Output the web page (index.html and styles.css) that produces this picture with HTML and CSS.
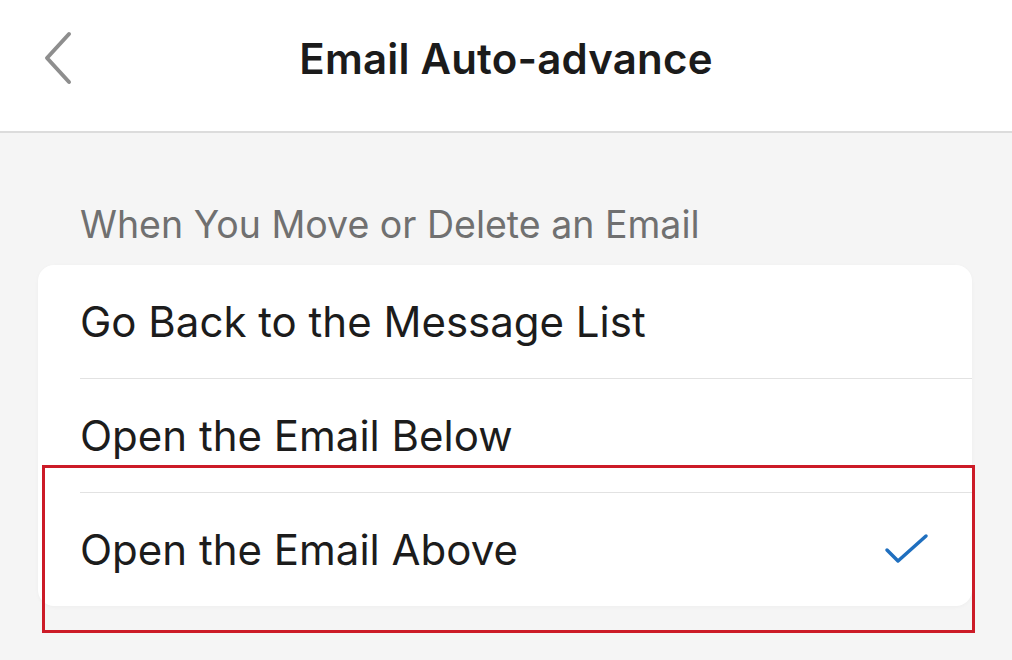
FILE: index.html
```html
<!DOCTYPE html>
<html lang="en">
<head>
    <meta charset="UTF-8">
    <meta name="viewport" content="width=device-width, initial-scale=1.0">
    <title>Email Auto-advance</title>
    <link rel="stylesheet" href="styles.css">
</head>
<body>
    <header class="top-bar">
        <a class="back-btn" href="#" aria-label="Back">
            <svg width="32" height="56" viewBox="0 0 32 56">
                <path d="M27 4 L5 28 L27 52" fill="none" stroke="#8e8e8e" stroke-width="4" stroke-linecap="round" stroke-linejoin="round"/>
            </svg>
        </a>
        <h1 class="title">Email Auto-advance</h1>
    </header>
    <main class="content">
        <div class="section-label">When You Move or Delete an Email</div>
        <ul class="option-list">
            <li class="option">Go Back to the Message List</li>
            <li class="option">Open the Email Below</li>
            <li class="option selected">
                <span>Open the Email Above</span>
                <svg class="check" width="46" height="34" viewBox="0 0 46 34">
                    <path d="M3 17 L14 28 L42 3" fill="none" stroke="#1f6fbf" stroke-width="3.5" stroke-linecap="round" stroke-linejoin="round"/>
                </svg>
                <div class="highlight"></div>
            </li>
        </ul>
    </main>
</body>
</html>
```

FILE: styles.css
```css
body {
    margin: 0;
    padding: 0;
    font-family: Inter, "Open Sans", sans-serif;
    background-color: #f5f5f5;
    width: 1012px;
    height: 660px;
    overflow: hidden;
}
.top-bar {
    position: relative;
    height: 133px;
    box-sizing: border-box;
    padding-bottom: 14px;
    background-color: #ffffff;
    border-bottom: 2px solid #dcdcdc;
    display: flex;
    align-items: center;
    justify-content: center;
}
.back-btn {
    position: absolute;
    left: 42px;
    top: 30px;
    display: block;
}
.title {
    margin: 0;
    font-size: 42px;
    font-weight: 600;
    color: #1b1b1b;
    letter-spacing: 0.2px;
}
.content {
    padding: 70px 40px 0 38px;
}
.section-label {
    padding-left: 42px;
    font-size: 37.5px;
    color: #707070;
    line-height: 44px;
    margin-bottom: 18px;
}
.option-list {
    list-style: none;
    margin: 0;
    padding: 0 0 0 42px;
    background-color: #ffffff;
    border-radius: 16px;
    box-shadow: 0 1px 4px rgba(0, 0, 0, 0.03);
}
.option {
    position: relative;
    height: 113px;
    display: flex;
    align-items: center;
    justify-content: space-between;
    font-size: 42px;
    color: #1c1c1c;
    border-bottom: 1px solid #e2e2e2;
}
.option:last-child {
    border-bottom: none;
}
.check {
    margin-right: 42px;
}
.highlight {
    position: absolute;
    left: -38px;
    right: -3px;
    top: -28px;
    bottom: -27px;
    border: 3px solid #cc1b27;
}
```
